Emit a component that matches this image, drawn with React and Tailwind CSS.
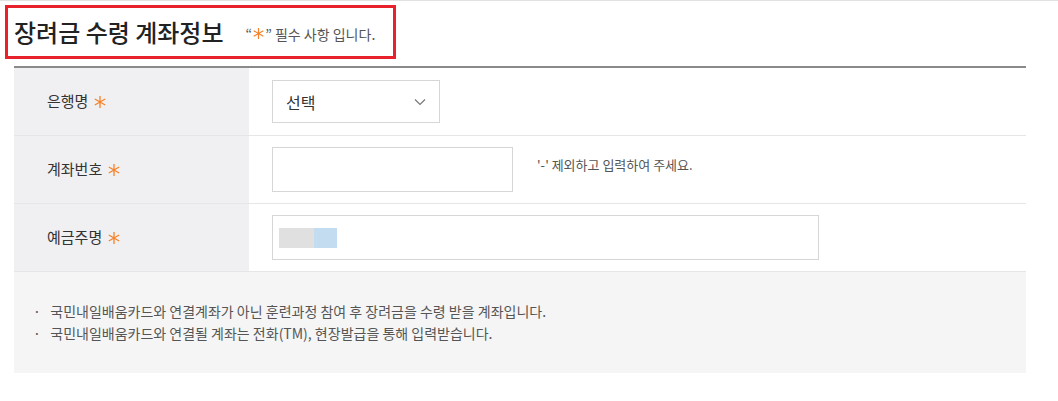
const font = { fontFamily: '"Noto Sans CJK KR", "Noto Sans", sans-serif' };

const Asterisk = ({ size = 14 }) => (
  <svg width={size} height={size} viewBox="0 0 14 14" fill="none" className="inline-block">
    <path d="M7 1v12M1.8 4l10.4 6M1.8 10l10.4-6" stroke="#f5822a" strokeWidth="1.3" />
  </svg>
);

const Row = ({ label, children }) => (
  <div className="flex h-[68px] border-b border-[#e6e6e6]">
    <div className="w-[235px] shrink-0 bg-[#f0f0f2] flex items-center gap-[5px] pl-[33px] text-[15px] text-[#333]">
      {label}
      <Asterisk />
    </div>
    <div className="flex items-center pl-[23px] gap-[24px]">{children}</div>
  </div>
);

export default function App() {
  return (
    <div
      className="w-[1058px] h-[401px] bg-white border-t border-[#e2e2e2] overflow-hidden"
      style={font}
    >
      <div className="ml-[5px] mt-[4px] w-[391px] h-[54px] border-[3px] border-[#e8222b] flex items-center pl-[6px]">
        <h1 className="text-[24px] font-medium text-[#222] leading-none">
          장려금 수령 계좌정보
        </h1>
        <p className="ml-[22px] mt-[3px] text-[14px] text-[#555] leading-none flex items-center">
          “<Asterisk size={13} />” 필수 사항 입니다.
        </p>
      </div>

      <div className="mx-[14px] mt-[7px] w-[1012px] border-t-2 border-[#8a8a8a]">
        <Row label="은행명">
          <div className="w-[168px] h-[43px] border border-[#d6d6d6] flex items-center justify-between px-[13px] text-[16px] text-[#333]">
            선택
            <svg width="12" height="8" viewBox="0 0 12 8" fill="none">
              <path d="M1 1.5l5 5 5-5" stroke="#777" strokeWidth="1.2" />
            </svg>
          </div>
        </Row>
        <Row label="계좌번호">
          <div className="w-[241px] h-[45px] border border-[#d6d6d6]" />
          <span className="text-[13px] text-[#555] -mt-[10px]">'-' 제외하고 입력하여 주세요.</span>
        </Row>
        <Row label="예금주명">
          <div className="w-[547px] h-[45px] border border-[#d6d6d6] flex items-center pl-[6px]">
            <div className="w-[35px] h-[20px] bg-[#e0e0e0]" />
            <div className="w-[23px] h-[20px] bg-[#c4dcf0]" />
          </div>
        </Row>
        <div className="h-[101px] bg-[#f5f5f5] pt-[28px] pl-[19px] text-[14px] text-[#555] leading-[22px]">
          <p>·&nbsp;&nbsp;&nbsp;국민내일배움카드와 연결계좌가 아닌 훈련과정 참여 후 장려금을 수령 받을 계좌입니다.</p>
          <p>·&nbsp;&nbsp;&nbsp;국민내일배움카드와 연결될 계좌는 전화(TM), 현장발급을 통해 입력받습니다.</p>
        </div>
      </div>
    </div>
  );
}
